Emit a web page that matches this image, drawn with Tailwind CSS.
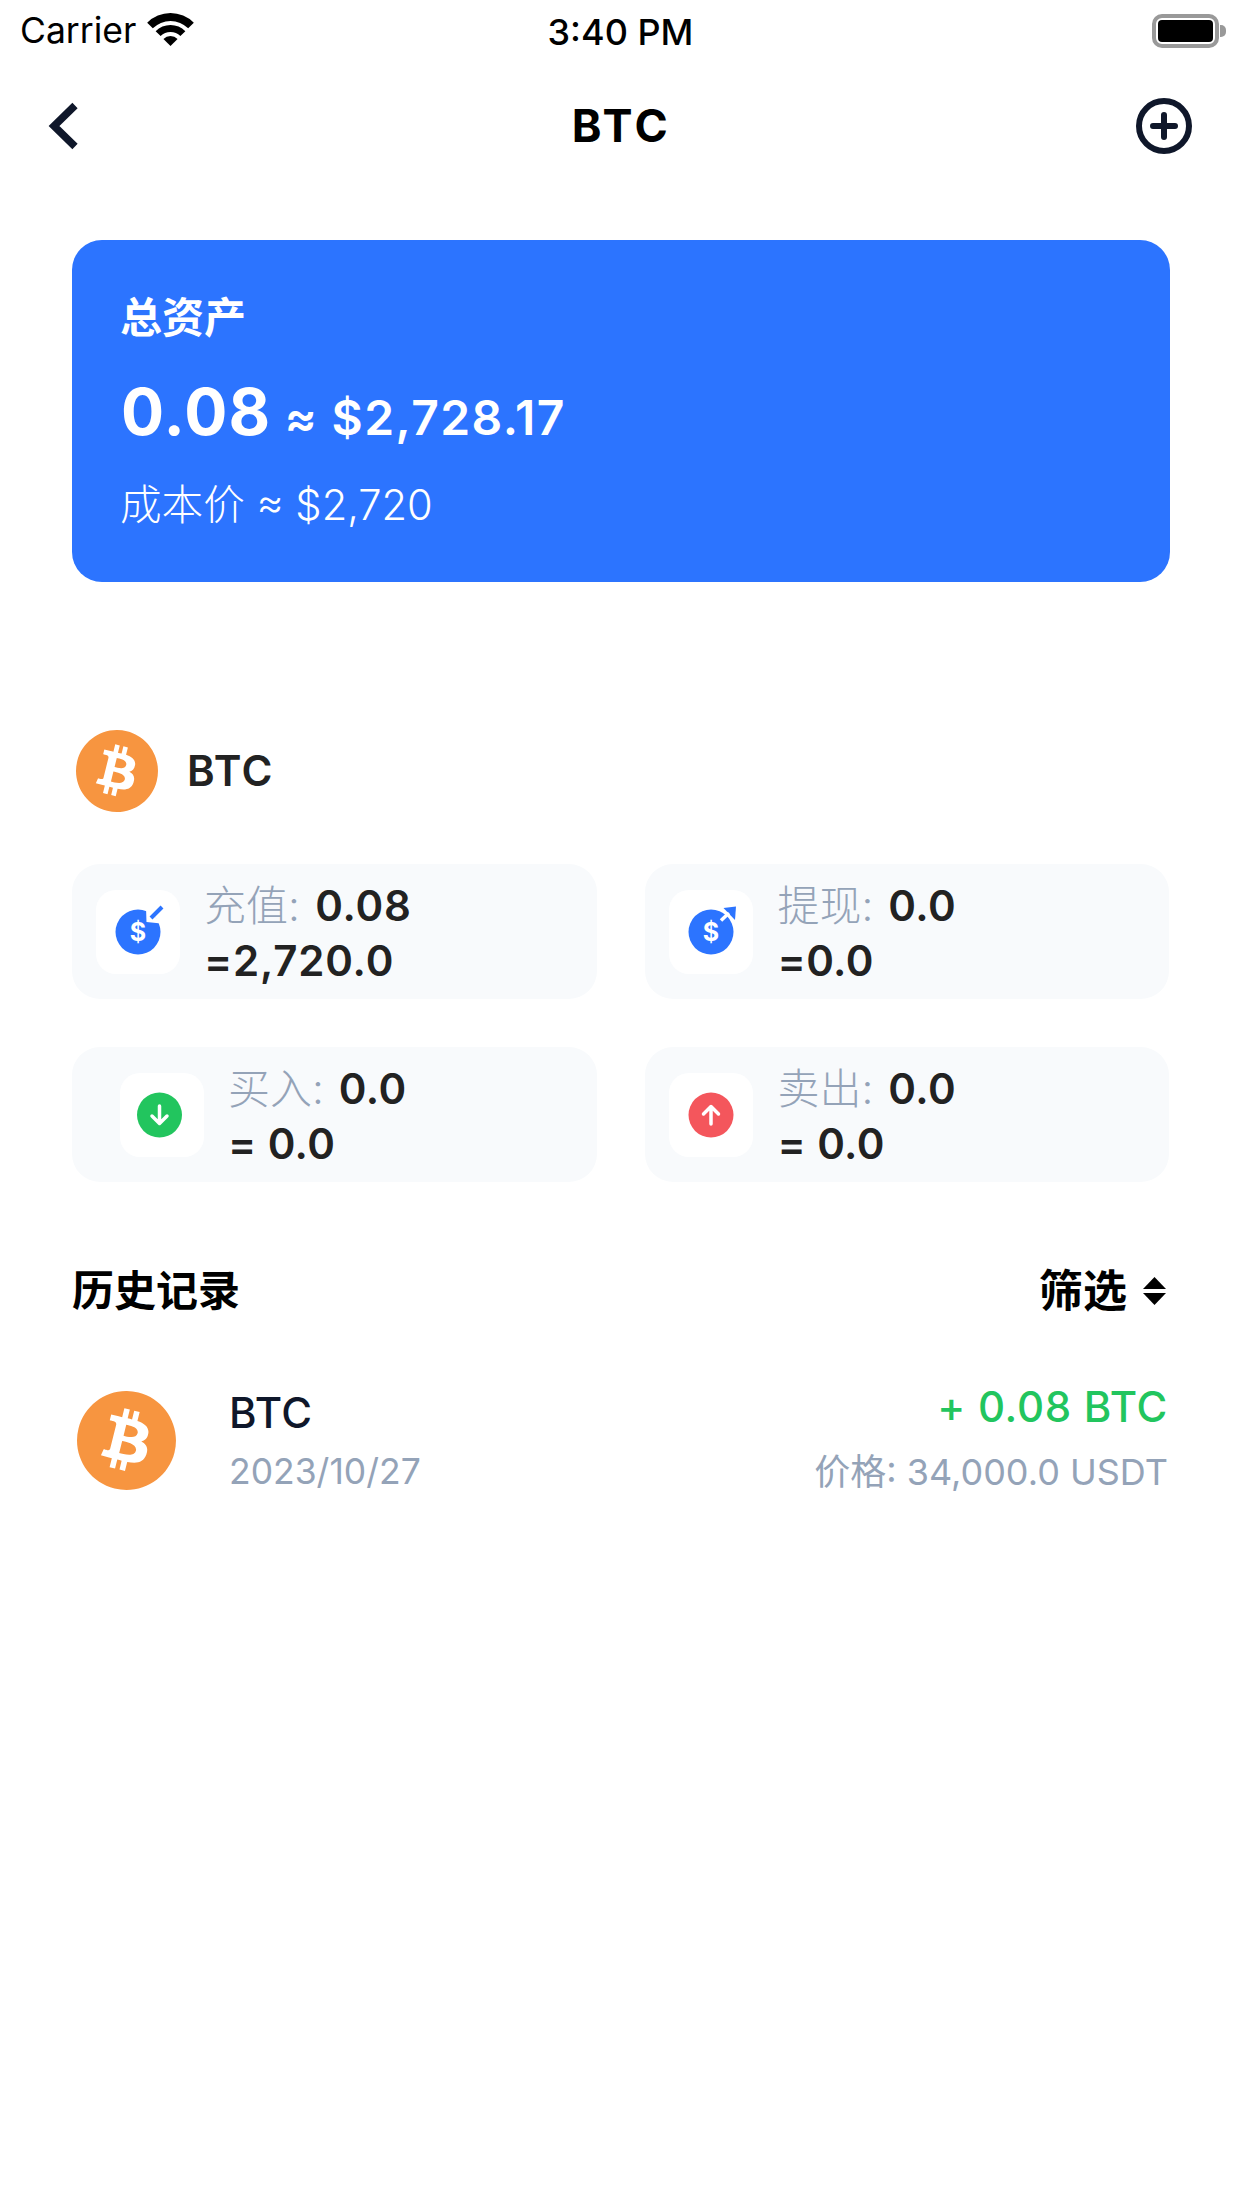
<!DOCTYPE html>
<html lang="zh">
<head>
<meta charset="utf-8">
<script src="https://cdn.jsdelivr.net/npm/@tailwindcss/browser@4"></script>
</head>
<body class="m-0 bg-white">
<div class="w-[1242px] h-[2208px] bg-white overflow-hidden flex flex-col font-[family-name:Inter,'Noto_Sans_CJK_SC',sans-serif] text-[#222222]">

  <!-- status bar -->
  <div class="h-[62px] flex items-center pl-[20px] pr-[16px] text-black">
    <div class="flex-1 flex items-center gap-[11px]">
      <span class="text-[35.5px] leading-[44px]">Carrier</span>
      <svg class="w-[47px] h-[33px] -mt-[3px]" viewBox="0 0 47 33" fill="#000"><path d="M23.5 33L16.43 25.93A10 10 0 0 1 30.57 25.93Z"/><path d="M8.65 18.15A21 21 0 0 1 38.35 18.15L33.4 23.1A14 14 0 0 0 13.6 23.1Z"/><path d="M.17 9.67A33 33 0 0 1 46.83 9.67L41.18 15.32A25 25 0 0 0 5.82 15.32Z"/></svg>
    </div>
    <span class="text-[36px] leading-[44px] font-medium mt-[1px] mr-[5px]">3:40 PM</span>
    <div class="flex-1 flex justify-end items-center">
      <div class="w-[67px] h-[34px] rounded-[10px] border-[4px] border-[#999999] p-[2px]"><div class="w-full h-full bg-black rounded-[4px]"></div></div>
      <div class="w-[6px] h-[12px] ml-[1px] bg-[#999999] rounded-r-[5px]"></div>
    </div>
  </div>

  <!-- nav -->
  <div class="h-[128px] flex items-center justify-between pl-[48px] pr-[50px]">
    <svg class="w-[56px] h-[56px]" viewBox="0 0 56 56" fill="none"><path d="M27 7.500L6 28L27 48.500" stroke="#0f172a" stroke-width="7.500"/></svg>
    <span class="text-[45px] leading-[56px] font-bold text-black tracking-[3.5px] ml-[3px]">BTC</span>
    <svg class="w-[56px] h-[56px]" viewBox="0 0 56 56" fill="none" stroke="#0f172a" stroke-width="6"><circle cx="28" cy="28" r="25"/><path d="M17 28H39M28 17V39" stroke-linecap="round"/></svg>
  </div>

  <!-- total card -->
  <div class="mt-[50px] mx-[72px] h-[342px] rounded-[30px] bg-[#2c74ff] text-white pl-[48px] pt-[50px]">
    <div class="text-[42px] leading-[56px] font-semibold">总资产</div>
    <div class="mt-[24px] h-[84px] flex items-baseline">
      <span class="text-[64px] leading-[84px] font-bold tracking-[1.2px] ml-[1px]">0.08</span>
      <span class="ml-[13px] text-[48px] leading-[84px] font-semibold tracking-[1.4px]">≈ $2,728.17</span>
    </div>
    <div class="mt-[24px] text-[41.6px] leading-[54px] font-light">成本价 ≈ $2,720</div>
  </div>

  <!-- token -->
  <div class="mt-[148px] pl-[76px] h-[82px] flex items-center gap-[29px]">
    <svg class="w-[82px] h-[82px]" viewBox="0 0 24 24" fill="#f79540"><path d="M23.638 14.904c-1.602 6.43-8.113 10.34-14.542 8.736C2.67 22.05-1.244 15.525.362 9.105 1.962 2.67 8.475-1.243 14.9.358c6.43 1.605 10.342 8.115 8.738 14.548v-.002zm-6.35-4.613c.24-1.59-.974-2.45-2.64-3.03l.54-2.153-1.315-.33-.525 2.107c-.345-.087-.705-.167-1.064-.25l.526-2.127-1.32-.33-.54 2.165c-.285-.067-.565-.132-.84-.2l-1.815-.45-.35 1.407s.975.225.955.236c.535.136.63.486.615.766l-1.477 5.92c-.075.166-.24.406-.614.314.015.02-.96-.24-.96-.24l-.66 1.51 1.71.426.93.242-.54 2.19 1.32.327.54-2.17c.36.1.705.19 1.05.273l-.51 2.154 1.32.33.545-2.19c2.24.427 3.93.257 4.64-1.774.57-1.637-.03-2.58-1.217-3.196.854-.193 1.5-.76 1.68-1.93h.01zm-3.01 4.22c-.404 1.64-3.157.75-4.05.53l.72-2.9c.896.23 3.757.67 3.33 2.37zm.41-4.24c-.37 1.49-2.662.735-3.405.55l.654-2.64c.744.18 3.137.52 2.75 2.084v.006z"/></svg>
    <span class="text-[42px] leading-[56px] font-semibold tracking-[1.4px]">BTC</span>
  </div>

  <!-- stat grid -->
  <div class="mt-[52px] pl-[72px] pr-[73px] grid grid-cols-2 gap-x-[48px] gap-y-[48px]">
    <div class="h-[135px] rounded-[28px] bg-[#f8fafc] flex items-center pl-[24px] gap-[24px]">
      <div class="w-[84px] h-[84px] rounded-[20px] bg-white">
        <svg class="w-[84px] h-[84px]" viewBox="0 0 84 84"><circle cx="42" cy="42" r="22.500" fill="#2c74ff"/><text x="42" y="51" text-anchor="middle" font-size="25" font-weight="700" fill="#fff">$</text><path d="M50 17L50.500 32L65 33.500Z" fill="#fff"/><path d="M55 28L66 17" stroke="#2c74ff" stroke-width="4"/></svg>
      </div>
      <div class="text-[42px] leading-[55px] font-semibold tracking-[0.8px] pt-[3px]">
        <div><span class="font-light text-[#94a3b8] tracking-normal">充值:</span> <span class="ml-[4px]">0.08</span></div>
        <div>=2,720.0</div>
      </div>
    </div>
    <div class="h-[135px] rounded-[28px] bg-[#f8fafc] flex items-center pl-[24px] gap-[25px]">
      <div class="w-[84px] h-[84px] rounded-[20px] bg-white">
        <svg class="w-[84px] h-[84px]" viewBox="0 0 84 84"><circle cx="42" cy="42" r="22.500" fill="#2c74ff"/><text x="42" y="51" text-anchor="middle" font-size="25" font-weight="700" fill="#fff">$</text><path d="M54.500 18L67 16.500L66 30Z" fill="#2c74ff"/><path d="M52 30.500L60 23" stroke="#fff" stroke-width="3.500"/></svg>
      </div>
      <div class="text-[42px] leading-[55px] font-semibold tracking-[0.4px] pt-[3px]">
        <div><span class="font-light text-[#94a3b8] tracking-normal">提现:</span> <span class="ml-[4px]">0.0</span></div>
        <div>=0.0</div>
      </div>
    </div>
    <div class="h-[135px] rounded-[28px] bg-[#f8fafc] flex items-center pl-[48px] gap-[24px]">
      <div class="w-[84px] h-[84px] rounded-[20px] bg-white">
        <svg class="w-[84px] h-[84px]" viewBox="0 0 84 84" fill="none"><circle cx="39.500" cy="42" r="22.500" fill="#22c55e"/><path d="M39.500 33V50M32 43L39.500 50.500L47 43" stroke="#fff" stroke-width="3.500" stroke-linecap="round" stroke-linejoin="round"/></svg>
      </div>
      <div class="text-[42px] leading-[55px] font-semibold tracking-[0.4px] pt-[3px]">
        <div><span class="font-light text-[#94a3b8] tracking-normal">买入:</span> <span class="ml-[4px]">0.0</span></div>
        <div>= 0.0</div>
      </div>
    </div>
    <div class="h-[135px] rounded-[28px] bg-[#f8fafc] flex items-center pl-[24px] gap-[25px]">
      <div class="w-[84px] h-[84px] rounded-[20px] bg-white">
        <svg class="w-[84px] h-[84px]" viewBox="0 0 84 84" fill="none"><circle cx="42" cy="42" r="22.500" fill="#f4565c"/><path d="M42 51V34M34.500 41L42 33.500L49.500 41" stroke="#fff" stroke-width="3.500" stroke-linecap="round" stroke-linejoin="round"/></svg>
      </div>
      <div class="text-[42px] leading-[55px] font-semibold tracking-[0.4px] pt-[3px]">
        <div><span class="font-light text-[#94a3b8] tracking-normal">卖出:</span> <span class="ml-[4px]">0.0</span></div>
        <div>= 0.0</div>
      </div>
    </div>
  </div>

  <!-- history header -->
  <div class="mt-[84px] h-[50px] pl-[72px] pr-[76px] flex items-center justify-between text-black leading-[50px] font-semibold">
    <span class="text-[42px]">历史记录</span>
    <div class="flex items-center gap-[16px]">
      <span class="text-[44px]">筛选</span>
      <svg class="w-[23px] h-[28px]" viewBox="0 0 23 28" fill="#000"><path d="M11.500 0L23 12H0Z"/><path d="M0 16H23L11.500 28Z"/></svg>
    </div>
  </div>

  <!-- history row -->
  <div class="mt-[66px] pl-[77px] pr-[74px] flex items-center">
    <svg class="w-[99px] h-[99px] shrink-0" viewBox="0 0 24 24" fill="#f79540"><path d="M23.638 14.904c-1.602 6.43-8.113 10.34-14.542 8.736C2.67 22.05-1.244 15.525.362 9.105 1.962 2.67 8.475-1.243 14.9.358c6.43 1.605 10.342 8.115 8.738 14.548v-.002zm-6.35-4.613c.24-1.59-.974-2.45-2.64-3.03l.54-2.153-1.315-.33-.525 2.107c-.345-.087-.705-.167-1.064-.25l.526-2.127-1.32-.33-.54 2.165c-.285-.067-.565-.132-.84-.2l-1.815-.45-.35 1.407s.975.225.955.236c.535.136.63.486.615.766l-1.477 5.92c-.075.166-.24.406-.614.314.015.02-.96-.24-.96-.24l-.66 1.51 1.71.426.93.242-.54 2.19 1.32.327.54-2.17c.36.1.705.19 1.05.273l-.51 2.154 1.32.33.545-2.19c2.24.427 3.93.257 4.64-1.774.57-1.637-.03-2.58-1.217-3.196.854-.193 1.5-.76 1.68-1.93h.01zm-3.01 4.22c-.404 1.64-3.157.75-4.05.53l.72-2.9c.896.23 3.757.67 3.33 2.37zm.41-4.24c-.37 1.49-2.662.735-3.405.55l.654-2.64c.744.18 3.137.52 2.75 2.084v.006z"/></svg>
    <div class="ml-[53px] mt-[2px]">
      <div class="text-[42px] leading-[50px] font-medium text-[#0f172a] tracking-[0.5px]">BTC</div>
      <div class="mt-[12px] text-[35.5px] leading-[44px] text-[#94a3b8]">2023/10/27</div>
    </div>
    <div class="ml-auto text-right mb-[4px]">
      <div class="text-[42px] leading-[50px] font-medium text-[#22c55e] tracking-[0.7px]">+ 0.08 BTC</div>
      <div class="mt-[18px] text-[36px] leading-[44px] text-[#94a3b8]">价格: 34,000.0 USDT</div>
    </div>
  </div>
</div>
</body>
</html>
